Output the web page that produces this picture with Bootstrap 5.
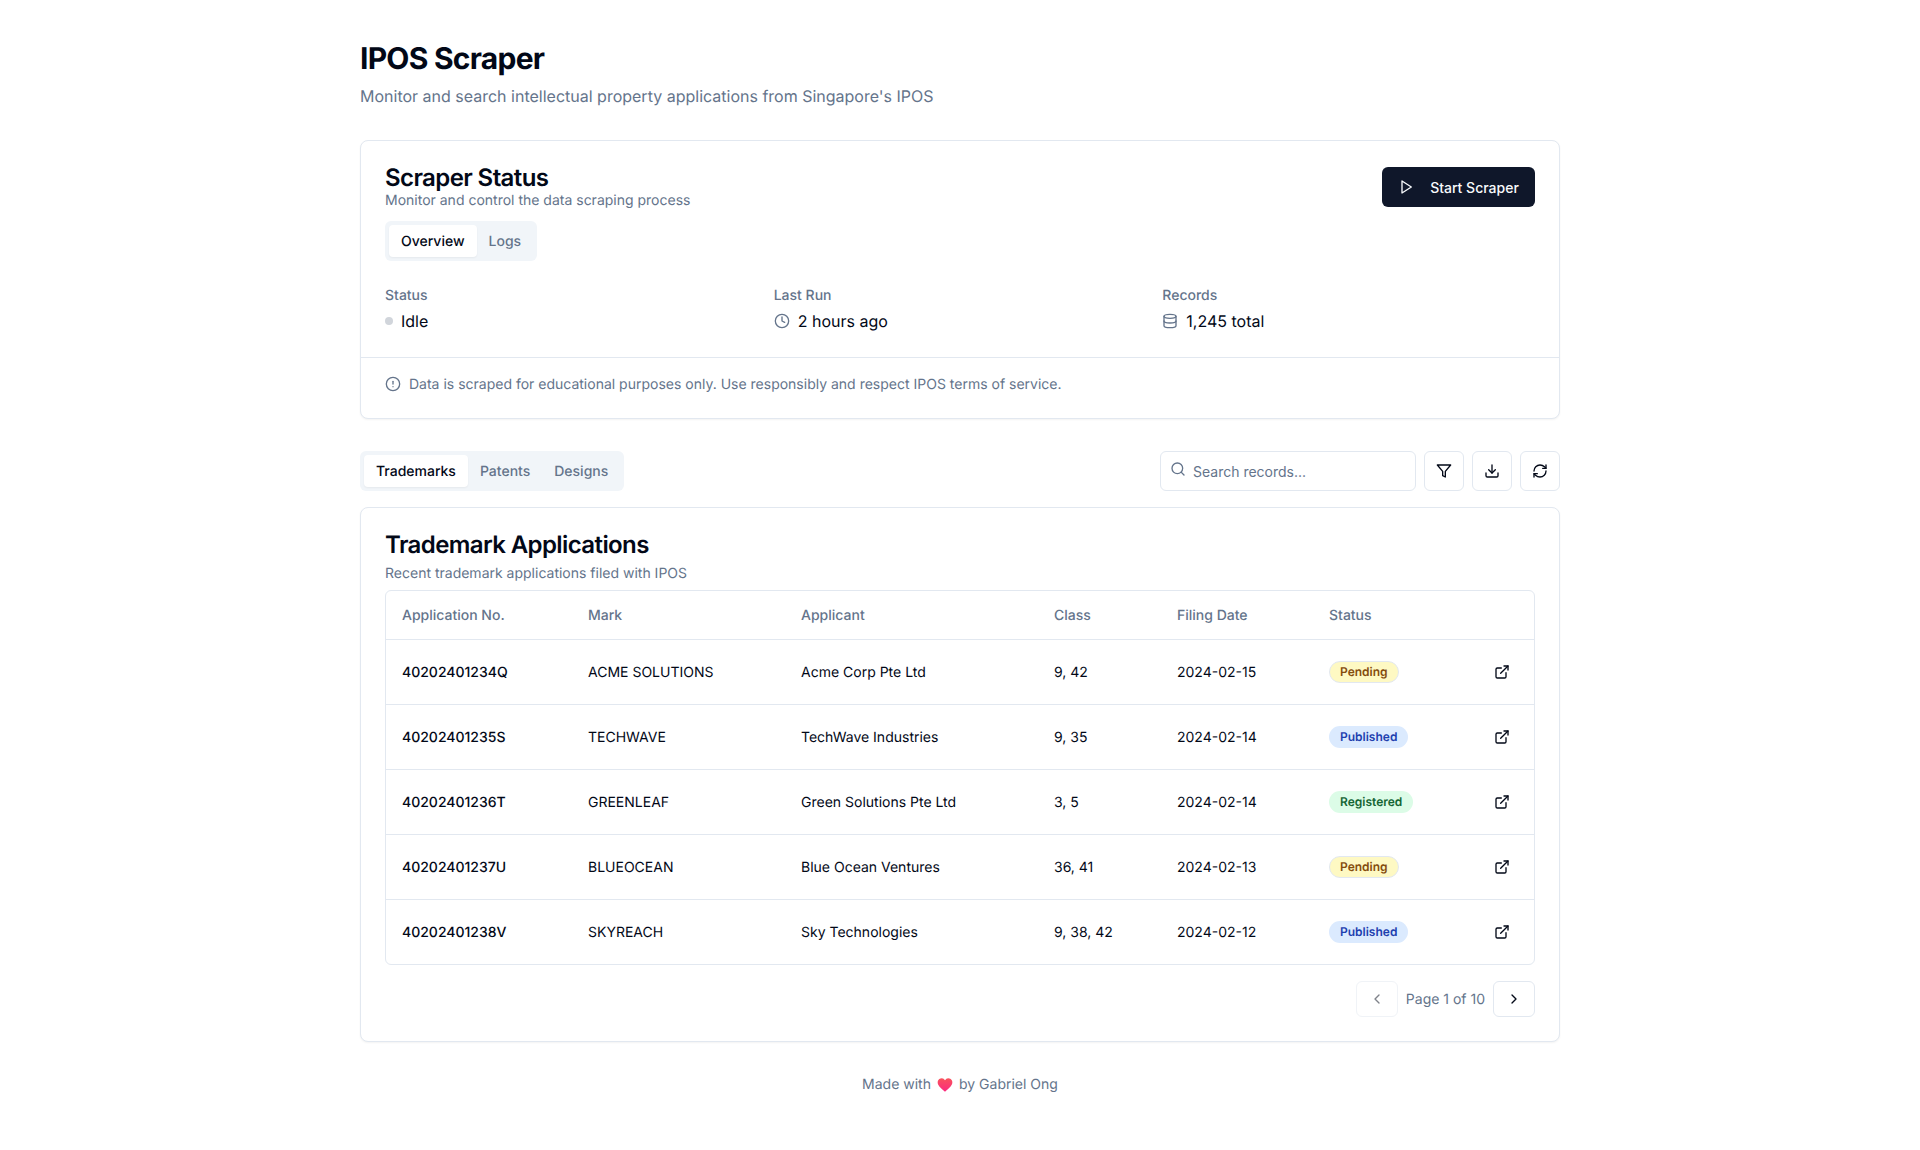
<!DOCTYPE html>
<html lang="en">
<head>
<meta charset="utf-8">
<title>IPOS Scraper</title>
<link href="https://cdn.jsdelivr.net/npm/bootstrap@5.3.0/dist/css/bootstrap.min.css" rel="stylesheet">
<style>
body{font-family:Inter,"Liberation Sans",sans-serif;color:#020817;background:#fff;font-size:16px;line-height:24px;text-rendering:geometricPrecision}
.page-wrap{width:1200px;margin:0 auto;padding-top:41px}
.page-title{font-size:30px;line-height:36px;font-weight:700;letter-spacing:-.75px;margin:0 0 7px;color:#020817}
.page-sub{color:#64748b;font-size:16px;line-height:24px;margin:0 0 32px}
.ui-card{border:1px solid #e2e8f0;border-radius:8px;box-shadow:0 1px 2px rgba(0,0,0,.05);background:#fff;--bs-card-bg:#fff}
.status-body{padding:24px}
.card-heading{font-size:24px;line-height:24px;font-weight:600;letter-spacing:-.6px;margin:1px 0 0;color:#020817}
.card-desc{font-size:14px;line-height:20px;color:#64748b;margin:0;padding-top:1px}
.start-btn{background:#0f172a;color:#f8fafc;border:0;border-radius:6px;height:40px;width:153px;margin-top:2px;font-size:14px;font-weight:500;line-height:20px;padding:0;display:flex;align-items:center;justify-content:center}
.start-btn:hover{background:#0f172a;color:#f8fafc}
.start-btn svg{width:16px;height:16px;margin-right:16px}
.start-btn span{margin-top:2px}
.seg-tabs{background:#f1f5f9;border-radius:6px;padding:4px;height:40px;display:inline-flex;flex-wrap:nowrap}
.seg-tabs .nav-link{color:#64748b;font-size:14px;font-weight:500;line-height:20px;padding:7px 12px 5px;border-radius:4px;background:transparent}
.seg-tabs .nav-link.active{background:#fff;color:#020817;box-shadow:0 1px 2px rgba(0,0,0,.05)}
.tabs-gap{margin-top:10px}
.stat-row{margin-top:24px;display:grid;grid-template-columns:repeat(3,1fr);gap:16px}
.stat-label{font-size:14px;line-height:20px;color:#64748b;font-weight:500;padding-top:1px}
.stat-val{font-size:16px;line-height:24px;display:flex;align-items:center;margin-top:3px;font-weight:400}
.stat-val svg{width:16px;height:16px;margin-right:8px;color:#64748b}
.dot{width:8px;height:8px;border-radius:50%;background:#d1d5db;margin-right:8px}
.status-foot{background:transparent;border-top:1px solid #e2e8f0;border-radius:0 0 8px 8px;padding:16px 24px 23px;font-size:14px;line-height:20px;color:#64748b;display:flex;align-items:flex-start}
.status-foot svg{width:16px;height:16px;margin:2px 8px 0 0;flex:none}
.status-foot span{padding-top:1px}
.toolbar{margin:32px 0 16px}
.search-box{position:relative;width:256px}
.search-box svg{position:absolute;left:10px;top:10px;width:16px;height:16px;color:#64748b}
.search-input{height:40px;border:1px solid #e2e8f0;border-radius:6px;font-size:14px;padding:8px 12px 8px 32px;color:#020817}
.search-input::placeholder{color:#64748b}
.icon-btn{width:40px;height:40px;padding:0;border:1px solid #e2e8f0;border-radius:6px;background:#fff;color:#020817;display:flex;align-items:center;justify-content:center}
.icon-btn svg{width:16px;height:16px}
.data-card-body{padding:24px}
.desc-2{margin-top:6px}
.table-shell{border:1px solid #e2e8f0;border-radius:6px;margin-top:6px;overflow:hidden}
.ip-table{margin:0;font-size:14px;table-layout:fixed;width:100%;--bs-table-color:#020817;--bs-table-border-color:#e2e8f0}
.ip-table th{color:#64748b;font-weight:500;height:48px;padding:3px 16px 0;vertical-align:middle;border-bottom:1px solid #e2e8f0;line-height:20px}
.ip-table td{height:65px;padding:0 16px;vertical-align:middle;line-height:20px;border-bottom:1px solid #e2e8f0}
.ip-table td:nth-child(-n+5){padding-top:2px}
.ip-table tbody tr:last-child td{border-bottom:0}
.c-no{width:186px}.c-mark{width:213px}.c-app{width:253px}.c-class{width:123px}.c-date{width:152px}.c-stat{width:156px}
.id-cell{font-weight:500}
.st-badge{font-size:12px;line-height:16px;font-weight:600;padding:2px 10px;border-radius:999px;border:1px solid transparent;display:inline-block}
.st-pending{background:#fef9c3;color:#854d0e;border-color:#e2e8f0}
.st-published{background:#dbeafe;color:#1e40af}
.st-registered{background:#dcfce7;color:#166534}
.link-ic{width:16px;height:16px;display:block;margin-left:auto;margin-right:8px;color:#020817}
.pager{margin-top:16px;display:flex;justify-content:flex-end;align-items:center;gap:8px;font-size:14px;color:#64748b}
.pager span{padding-top:1px}
.page-btn{width:42px;height:36px;padding:0;border:1px solid #e2e8f0;border-radius:6px;background:#fff;color:#020817;display:flex;align-items:center;justify-content:center}
.page-btn:disabled{opacity:.5;border-color:#e2e8f0;color:#020817;background:#fff}
.page-btn svg{width:16px;height:16px}
.foot-line{margin-top:33px;font-size:14px;line-height:20px;color:#64748b;display:flex;justify-content:center;align-items:center;gap:6px}
.foot-line svg{width:16px;height:16px}
.sprite{position:absolute;width:0;height:0;overflow:hidden}
</style>
</head>
<body>
<svg class="sprite" aria-hidden="true">
<defs>
<symbol id="i-play" viewBox="0 0 24 24" fill="none" stroke="currentColor" stroke-width="2" stroke-linecap="round" stroke-linejoin="round"><polygon points="6 3 20 12 6 21 6 3"/></symbol>
<symbol id="i-clock" viewBox="0 0 24 24" fill="none" stroke="currentColor" stroke-width="2" stroke-linecap="round" stroke-linejoin="round"><circle cx="12" cy="12" r="10"/><polyline points="12 6 12 12 16 14"/></symbol>
<symbol id="i-db" viewBox="0 0 24 24" fill="none" stroke="currentColor" stroke-width="2" stroke-linecap="round" stroke-linejoin="round"><ellipse cx="12" cy="5" rx="9" ry="3"/><path d="M3 5V19A9 3 0 0 0 21 19V5"/><path d="M3 12A9 3 0 0 0 21 12"/></symbol>
<symbol id="i-info" viewBox="0 0 24 24" fill="none" stroke="currentColor" stroke-width="2" stroke-linecap="round" stroke-linejoin="round"><circle cx="12" cy="12" r="10"/><line x1="12" y1="8" x2="12" y2="12"/><line x1="12" y1="16" x2="12.01" y2="16"/></symbol>
<symbol id="i-search" viewBox="0 0 24 24" fill="none" stroke="currentColor" stroke-width="2" stroke-linecap="round" stroke-linejoin="round"><circle cx="11" cy="11" r="8"/><path d="m21 21-4.3-4.3"/></symbol>
<symbol id="i-filter" viewBox="0 0 24 24" fill="none" stroke="currentColor" stroke-width="2" stroke-linecap="round" stroke-linejoin="round"><polygon points="22 3 2 3 10 12.46 10 19 14 21 14 12.46 22 3"/></symbol>
<symbol id="i-dl" viewBox="0 0 24 24" fill="none" stroke="currentColor" stroke-width="2" stroke-linecap="round" stroke-linejoin="round"><path d="M21 15v4a2 2 0 0 1-2 2H5a2 2 0 0 1-2-2v-4"/><polyline points="7 10 12 15 17 10"/><line x1="12" y1="15" x2="12" y2="3"/></symbol>
<symbol id="i-refresh" viewBox="0 0 24 24" fill="none" stroke="currentColor" stroke-width="2" stroke-linecap="round" stroke-linejoin="round"><path d="M3 12a9 9 0 0 1 9-9 9.75 9.75 0 0 1 6.74 2.74L21 8"/><path d="M21 3v5h-5"/><path d="M21 12a9 9 0 0 1-9 9 9.75 9.75 0 0 1-6.74-2.74L3 16"/><path d="M8 16H3v5"/></symbol>
<symbol id="i-ext" viewBox="0 0 24 24" fill="none" stroke="currentColor" stroke-width="2" stroke-linecap="round" stroke-linejoin="round"><path d="M18 13v6a2 2 0 0 1-2 2H5a2 2 0 0 1-2-2V8a2 2 0 0 1 2-2h6"/><polyline points="15 3 21 3 21 9"/><line x1="10" y1="14" x2="21" y2="3"/></symbol>
<symbol id="i-left" viewBox="0 0 24 24" fill="none" stroke="currentColor" stroke-width="2" stroke-linecap="round" stroke-linejoin="round"><path d="m15 18-6-6 6-6"/></symbol>
<symbol id="i-right" viewBox="0 0 24 24" fill="none" stroke="currentColor" stroke-width="2" stroke-linecap="round" stroke-linejoin="round"><path d="m9 18 6-6-6-6"/></symbol>
</defs>
</svg>

<div class="page-wrap">
  <h1 class="page-title">IPOS Scraper</h1>
  <p class="page-sub">Monitor and search intellectual property applications from Singapore's IPOS</p>

  <div class="card ui-card">
    <div class="status-body">
      <div class="d-flex justify-content-between align-items-start">
        <div>
          <h2 class="card-heading">Scraper Status</h2>
          <p class="card-desc">Monitor and control the data scraping process</p>
        </div>
        <button class="btn start-btn" type="button"><svg><use href="#i-play"/></svg><span>Start Scraper</span></button>
      </div>
      <ul class="nav seg-tabs tabs-gap">
        <li class="nav-item"><a class="nav-link active" href="#">Overview</a></li>
        <li class="nav-item"><a class="nav-link" href="#">Logs</a></li>
      </ul>
      <div class="stat-row">
        <div><div class="stat-label">Status</div><div class="stat-val"><span class="dot"></span>Idle</div></div>
        <div><div class="stat-label">Last Run</div><div class="stat-val"><svg><use href="#i-clock"/></svg>2 hours ago</div></div>
        <div><div class="stat-label">Records</div><div class="stat-val"><svg><use href="#i-db"/></svg>1,245 total</div></div>
      </div>
    </div>
    <div class="status-foot"><svg><use href="#i-info"/></svg><span>Data is scraped for educational purposes only. Use responsibly and respect IPOS terms of service.</span></div>
  </div>

  <div class="toolbar d-flex justify-content-between align-items-center">
    <ul class="nav seg-tabs">
      <li class="nav-item"><a class="nav-link active" href="#">Trademarks</a></li>
      <li class="nav-item"><a class="nav-link" href="#">Patents</a></li>
      <li class="nav-item"><a class="nav-link" href="#">Designs</a></li>
    </ul>
    <div class="d-flex gap-2">
      <div class="search-box"><svg><use href="#i-search"/></svg><input class="form-control search-input" type="text" placeholder="Search records..."></div>
      <button class="btn icon-btn" type="button" aria-label="Filter"><svg><use href="#i-filter"/></svg></button>
      <button class="btn icon-btn" type="button" aria-label="Download"><svg><use href="#i-dl"/></svg></button>
      <button class="btn icon-btn" type="button" aria-label="Refresh"><svg><use href="#i-refresh"/></svg></button>
    </div>
  </div>

  <div class="card ui-card">
    <div class="data-card-body">
      <h2 class="card-heading">Trademark Applications</h2>
      <p class="card-desc desc-2">Recent trademark applications filed with IPOS</p>
      <div class="table-shell">
        <table class="table ip-table">
          <thead>
            <tr><th class="c-no">Application No.</th><th class="c-mark">Mark</th><th class="c-app">Applicant</th><th class="c-class">Class</th><th class="c-date">Filing Date</th><th class="c-stat">Status</th><th></th></tr>
          </thead>
          <tbody>
            <tr><td class="id-cell">40202401234Q</td><td>ACME SOLUTIONS</td><td>Acme Corp Pte Ltd</td><td>9, 42</td><td>2024-02-15</td><td><span class="st-badge st-pending">Pending</span></td><td><svg class="link-ic"><use href="#i-ext"/></svg></td></tr>
            <tr><td class="id-cell">40202401235S</td><td>TECHWAVE</td><td>TechWave Industries</td><td>9, 35</td><td>2024-02-14</td><td><span class="st-badge st-published">Published</span></td><td><svg class="link-ic"><use href="#i-ext"/></svg></td></tr>
            <tr><td class="id-cell">40202401236T</td><td>GREENLEAF</td><td>Green Solutions Pte Ltd</td><td>3, 5</td><td>2024-02-14</td><td><span class="st-badge st-registered">Registered</span></td><td><svg class="link-ic"><use href="#i-ext"/></svg></td></tr>
            <tr><td class="id-cell">40202401237U</td><td>BLUEOCEAN</td><td>Blue Ocean Ventures</td><td>36, 41</td><td>2024-02-13</td><td><span class="st-badge st-pending">Pending</span></td><td><svg class="link-ic"><use href="#i-ext"/></svg></td></tr>
            <tr><td class="id-cell">40202401238V</td><td>SKYREACH</td><td>Sky Technologies</td><td>9, 38, 42</td><td>2024-02-12</td><td><span class="st-badge st-published">Published</span></td><td><svg class="link-ic"><use href="#i-ext"/></svg></td></tr>
          </tbody>
        </table>
      </div>
      <div class="pager">
        <button class="btn page-btn" type="button" disabled aria-label="Previous"><svg><use href="#i-left"/></svg></button>
        <span>Page 1 of 10</span>
        <button class="btn page-btn" type="button" aria-label="Next"><svg><use href="#i-right"/></svg></button>
      </div>
    </div>
  </div>

  <div class="foot-line"><span>Made with</span><svg viewBox="0 0 24 24"><defs><linearGradient id="heartGrad" x1="0" y1="0" x2="0" y2="1"><stop offset="0" stop-color="#f9525c"/><stop offset="1" stop-color="#fb2a80"/></linearGradient></defs><path fill="url(#heartGrad)" d="M12 22C5 16.500 1 12.600 1 8a6 6 0 0 1 11-3.300A6 6 0 0 1 23 8c0 4.600-4 8.500-11 14z"/></svg><span>by Gabriel Ong</span></div>
</div>
</body>
</html>
